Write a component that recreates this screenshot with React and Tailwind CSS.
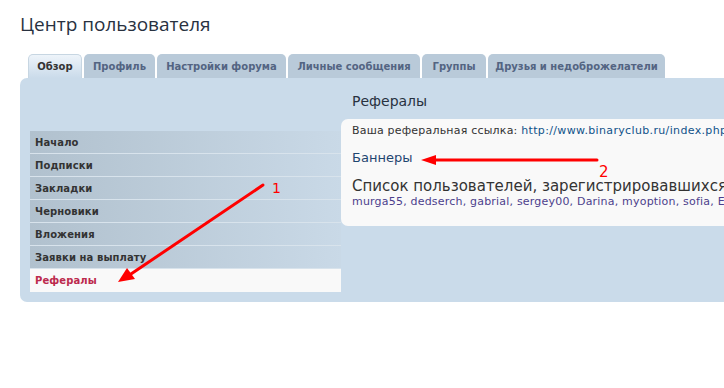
import React from 'react';

const tabs = [
  { label: 'Обзор', w: 'w-[54px]', active: true },
  { label: 'Профиль', w: 'w-[71px]' },
  { label: 'Настройки форума', w: 'w-[129px]' },
  { label: 'Личные сообщения', w: 'w-[132px]' },
  { label: 'Группы', w: 'w-[64px]' },
  { label: 'Друзья и недоброжелатели', w: 'w-[177px]' },
];

const menu = ['Начало', 'Подписки', 'Закладки', 'Черновики', 'Вложения', 'Заявки на выплату'];

function Arrows() {
  return (
    <svg className="absolute inset-0 pointer-events-none" width="724" height="388">
      {/* arrow 1 */}
      <line x1="263" y1="185" x2="128" y2="276" stroke="#ff0000" strokeWidth="3" strokeLinecap="round" />
      <polygon points="118,282 127,268 135,279" fill="#ff0000" />
      {/* arrow 2 */}
      <line x1="597" y1="160" x2="432" y2="160" stroke="#ff0000" strokeWidth="3" strokeLinecap="round" />
      <polygon points="421,160 436,155 436,165" fill="#ff0000" />
      <text x="272" y="193" fill="#ff0000" fontSize="14" fontFamily="'DejaVu Sans', sans-serif">1</text>
      <text x="599" y="177" fill="#ff0000" fontSize="15" fontFamily="'DejaVu Sans', sans-serif">2</text>
    </svg>
  );
}

export default function App() {
  return (
    <div className="relative w-[724px] h-[388px] bg-white overflow-hidden font-['DejaVu_Sans',sans-serif] text-[#333]">
      <h1 className="pl-5 pt-[12px] h-[54px] text-[19px] leading-[24px] text-[#28313f] font-['Open_Sans',sans-serif]">
        Центр пользователя
      </h1>

      {/* tabs */}
      <div className="flex gap-[2px] pl-[28px] h-[24px]">
        {tabs.map((t) => (
          <div
            key={t.label}
            className={`${t.w} h-full shrink-0 rounded-t-[5px] flex items-center justify-center text-[10px] font-bold ${
              t.active
                ? 'bg-gradient-to-b from-[#eef4fa] to-[#cadbea] text-[#333] border border-b-0 border-[#c7d6e2]'
                : 'bg-[#b9cad9] text-[#536482]'
            }`}
          >
            {t.label}
          </div>
        ))}
      </div>

      {/* panel */}
      <div className="ml-5 h-[224px] bg-[#cadbea] rounded-l-[7px] flex pl-[10px]">
        <div className="w-[311px] shrink-0 pt-[53px]">
          {menu.map((m) => (
            <div
              key={m}
              className="h-[23px] border-b border-[#d8e3ec] bg-gradient-to-r from-[#b1c1ce] to-[#c9d9e7] pl-[5px] flex items-center text-[10px] font-bold text-[#333] tracking-[0.1px]"
            >
              {m}
            </div>
          ))}
          <div className="h-[23px] bg-[#f9f9f9] pl-[5px] flex items-center text-[10px] font-bold text-[#bc2a4d] tracking-[0.1px]">
            Рефералы
          </div>
        </div>

        <div className="flex-1 min-w-0">
          <div className="h-[41px] pl-[11px] pt-[14px] text-[14px] leading-[18px] text-[#28313f] whitespace-nowrap">
            Рефералы
          </div>
          <div className="h-[107px] bg-[#f9f9f9] rounded-l-[7px] pl-[11px] pt-[5px] whitespace-nowrap overflow-hidden">
            <div className="text-[11px] leading-[14px] text-[#333] tracking-[0.2px]">
              Ваша реферальная ссылка:{' '}
              <span className="text-[#105289] tracking-[0.35px]">http://www.binaryclub.ru/index.php?ref=1</span>
            </div>
            <div className="mt-[12px] text-[13px] leading-[16px] text-[#1f4670]">Баннеры</div>
            <div className="mt-[12px] text-[15px] leading-[17px] text-[#333]">
              Список пользователей, зарегистрировавшихся по вашей ссылке
            </div>
            <div className="text-[11px] leading-[14px] text-[#4c3f8c] tracking-[0.2px]">
              murga55, dedserch, gabrial, sergey00, Darina, myoption, sofia, Elena
            </div>
          </div>
        </div>
      </div>

      <Arrows />
    </div>
  );
}
